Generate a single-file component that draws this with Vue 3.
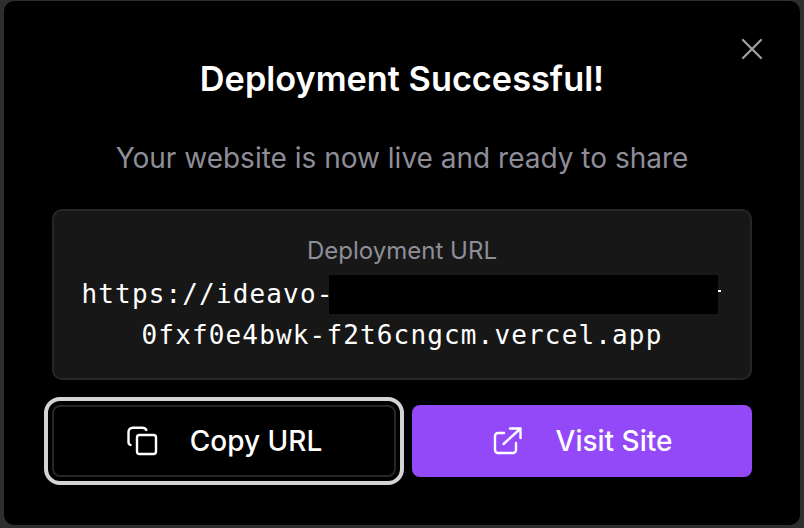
<script setup>
const title = 'Deployment Successful!'
const subtitle = 'Your website is now live and ready to share'
</script>

<template>
  <div class="page">
    <main class="modal">
      <button class="close" aria-label="Close">
        <svg width="24" height="24" viewBox="0 0 24 24" fill="none" stroke="currentColor" stroke-width="2.2" stroke-linecap="round"><path d="M3 3l18 18M21 3L3 21"/></svg>
      </button>
      <h1>{{ title }}</h1>
      <p class="sub">{{ subtitle }}</p>
      <section class="card">
        <div class="label">Deployment URL</div>
        <div class="url">
          <div class="line">https://ideavo-<span class="redact"></span><i class="tick"></i></div>
          <div class="line">0fxf0e4bwk-f2t6cngcm.vercel.app</div>
        </div>
      </section>
      <div class="actions">
        <button class="btn copy">
          <svg class="ico" width="32" height="32" viewBox="0 0 32 32" fill="none" stroke="currentColor" stroke-width="2.4" stroke-linecap="round" stroke-linejoin="round">
            <rect x="11" y="10" width="19" height="19" rx="2.5"/>
            <path d="M4.500 20C3.200 19.500 2.500 18.300 2.500 17V7c0-2.400 1.900-4.300 4.300-4.300H16.500c1.800 0 3.200.9 3.800 2.300"/>
          </svg>
          <span>Copy URL</span>
        </button>
        <button class="btn visit">
          <svg class="ico" width="32" height="32" viewBox="0 0 32 32" fill="none" stroke="currentColor" stroke-width="2.4" stroke-linecap="round" stroke-linejoin="round">
            <path d="M12 8H6a3 3 0 0 0-3 3v14a3 3 0 0 0 3 3h15a3 3 0 0 0 3-3v-7"/>
            <path d="M11.600 19L28 4M18 3.500h10.500V13"/>
          </svg>
          <span>Visit Site</span>
        </button>
      </div>
    </main>
  </div>
</template>

<style scoped>
.page {
  width: 804px;
  height: 528px;
  box-sizing: border-box;
  padding: 1px 4px 3px 4px;
  background: #2e2e2e;
  font-family: Inter, "Liberation Sans", sans-serif;
}
.modal {
  position: relative;
  height: 100%;
  box-sizing: border-box;
  background: #000;
  border-radius: 10px;
  padding: 56px 48px 0;
  display: flex;
  flex-direction: column;
}
.close {
  position: absolute;
  top: 36px;
  left: 736px;
  padding: 0;
  width: 24px;
  height: 24px;
  background: none;
  border: 0;
  color: #a3a3a3;
}
h1 {
  margin: 0;
  height: 44px;
  line-height: 44px;
  font-size: 34.300px;
  font-weight: 600;
  color: #fff;
  text-align: center;
}
.sub {
  margin: 39px 0 0;
  height: 36px;
  line-height: 36px;
  font-size: 28px;
  color: #8e8e98;
  text-align: center;
}
.card {
  margin-top: 33px;
  height: 171px;
  box-sizing: border-box;
  background: #171717;
  border: 2px solid #262626;
  border-radius: 10px;
  padding: 24px 0 0;
  text-align: center;
}
.label {
  height: 32px;
  line-height: 32px;
  font-size: 24px;
  color: #8e8e98;
}
.url {
  margin-top: 7px;
  font-family: "DejaVu Sans Mono", "Liberation Mono", monospace;
  font-size: 26px;
  letter-spacing: 1.15px;
  color: #fff;
}
.line {
  height: 41px;
  line-height: 41px;
  white-space: nowrap;
}
.redact {
  display: inline-block;
  position: relative;
  top: -1px;
  width: 389px;
  height: 39px;
  margin-left: -5px;
  background: #000;
  vertical-align: middle;
}
.tick {
  display: inline-block;
  position: relative;
  top: -5px;
  width: 3px;
  height: 2px;
  margin-right: 2px;
  background: #fff;
  vertical-align: middle;
}
.actions {
  margin-top: 25px;
  display: grid;
  grid-template-columns: 344px 340px;
  gap: 16px;
}
.btn {
  height: 72px;
  box-sizing: border-box;
  border-radius: 8px;
  font-family: inherit;
  font-size: 28px;
  font-weight: 500;
  color: #fff;
  display: flex;
  align-items: center;
  justify-content: center;
  gap: 32px;
  padding: 0;
}
.copy {
  background: #000;
  border: 2px solid #262626;
  outline: 4px solid #d4d4d4;
  outline-offset: 4px;
}
.visit {
  background: #9449f9;
  border: 0;
}
.ico {
  flex: none;
}
</style>

<style>
html, body { background: #2e2e2e; overflow: hidden; }
</style>
